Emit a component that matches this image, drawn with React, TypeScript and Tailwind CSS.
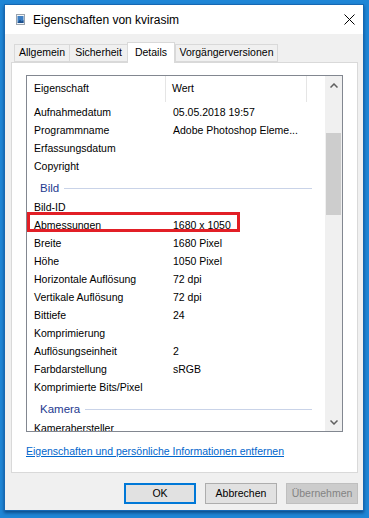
import React from 'react';

type Row = { name: string; value?: string; group?: boolean };

const rows: Row[] = [
  { name: 'Aufnahmedatum', value: '05.05.2018 19:57' },
  { name: 'Programmname', value: 'Adobe Photoshop Eleme...' },
  { name: 'Erfassungsdatum' },
  { name: 'Copyright' },
  { name: 'Bild', group: true },
  { name: 'Bild-ID' },
  { name: 'Abmessungen', value: '1680 x 1050' },
  { name: 'Breite', value: '1680 Pixel' },
  { name: 'Höhe', value: '1050 Pixel' },
  { name: 'Horizontale Auflösung', value: '72 dpi' },
  { name: 'Vertikale Auflösung', value: '72 dpi' },
  { name: 'Bittiefe', value: '24' },
  { name: 'Komprimierung' },
  { name: 'Auflösungseinheit', value: '2' },
  { name: 'Farbdarstellung', value: 'sRGB' },
  { name: 'Komprimierte Bits/Pixel' },
  { name: 'Kamera', group: true },
  { name: 'Kamerahersteller' },
];

const tabs = [
  { label: 'Allgemein', w: 'w-[55px]' },
  { label: 'Sicherheit', w: 'w-[58px]' },
  { label: 'Details', w: 'w-[48px]', active: true },
  { label: 'Vorgängerversionen', w: 'w-[103px]' },
];

const FileIcon = () => (
  <svg width="9" height="11" viewBox="0 0 9 11">
    <rect x="0.5" y="0.5" width="8" height="10" fill="#f4f6f8" stroke="#9aa3ad" />
    <rect x="1.5" y="2" width="6" height="7" fill="#3d7fc4" />
    <path d="M1.5 9 L4 5.5 L5.5 7.5 L7.5 6 L7.5 9 Z" fill="#1d4f8c" />
  </svg>
);

const Chevron = ({ down }: { down?: boolean }) => (
  <svg width="8" height="5" viewBox="0 0 8 5">
    <path d={down ? 'M0.5 0.5 L4 4 L7.5 0.5' : 'M0.5 4.5 L4 1 L7.5 4.5'} fill="none" stroke="#606060" strokeWidth="1.5" />
  </svg>
);

const DetailsList = () => (
  <div className="relative w-[317px] h-[357px] border border-[#828790] bg-white flex">
    <div className="flex-1 overflow-hidden">
      {/* header */}
      <div className="flex h-[26px] mb-[2px] items-center">
        <div className="w-[139px] h-full pl-[7px] flex items-center border-r border-[#e5e5e5]">Eigenschaft</div>
        <div className="w-[141px] h-full pl-[6px] flex items-center border-r border-[#e5e5e5]">Wert</div>
        <div className="flex-1" />
      </div>
      {rows.map(r =>
        r.group ? (
          <div key={r.name} className="h-[22px] flex items-center pl-[13px] pr-[13px] pt-[2px]">
            <span className="text-[11.5px] text-[#1e3a8f]">{r.name}</span>
            <div className="flex-1 h-px bg-[#c9d3e8] ml-[5px]" />
          </div>
        ) : (
          <div key={r.name} className="h-[18.1px] flex items-center">
            <div className="w-[139px] pl-[7px] whitespace-nowrap">{r.name}</div>
            <div className="pl-[7px] whitespace-nowrap">{r.value}</div>
          </div>
        )
      )}
    </div>
    {/* scrollbar */}
    <div className="w-[17px] bg-[#f0f0f0] flex flex-col">
      <div className="h-[17px] flex items-center justify-center pt-[2px]"><Chevron /></div>
      <div className="mt-[40px] mx-[1px] h-[82px] bg-[#cdcdcd]" />
      <div className="flex-1" />
      <div className="h-[17px] flex items-center justify-center"><Chevron down /></div>
    </div>
    {/* annotation */}
    <div className="absolute left-0 top-[136px] w-[213px] h-[20px] border-[3px] border-[#e21f26]" />
  </div>
);

export default function App() {
  return (
    <div className="w-[369px] h-[518px] bg-[#1f86d6] pt-[4px] pl-[4px] font-['Liberation_Sans',Arial,sans-serif] text-[10.5px] text-black">
      <div className="w-[360px] h-[507px] border border-[#1668b3] bg-[#f0f0f0] flex flex-col shadow-[0_2px_3px_rgba(0,40,90,0.6)]">
        {/* title bar */}
        <div className="h-[29px] bg-white flex items-center pl-[11px] pr-[7px]">
          <FileIcon />
          <span className="ml-[8px] text-[12px] flex-1">Eigenschaften von kvirasim</span>
          <svg width="11" height="11" viewBox="0 0 11 11" className="mr-[1px]">
            <path d="M0.5 0.5 L10.5 10.5 M10.5 0.5 L0.5 10.5" stroke="#000" strokeWidth="1" />
          </svg>
        </div>
        {/* client */}
        <div className="flex-1 flex flex-col pl-[6px]">
          <div className="h-[29px] flex items-end pl-[3px] -mb-px relative z-10">
            {tabs.map(t =>
              t.active ? (
                <div key={t.label} className={`${t.w} h-[21px] bg-white border border-b-0 border-[#d9d9d9] flex items-center justify-center pb-[1px]`}>
                  {t.label}
                </div>
              ) : (
                <div key={t.label} className={`${t.w} h-[18px] mb-px bg-[#f0f0f0] border border-r-0 last:border-r border-[#d9d9d9] flex items-center justify-center`}>
                  {t.label}
                </div>
              )
            )}
          </div>
          <div className="w-[347px] h-[411px] bg-white border border-[#d9d9d9] pl-[14px] pt-[12px]">
            <DetailsList />
            <div className="mt-[12px] leading-[15px] text-[#0066cc] underline">
              Eigenschaften und persönliche Informationen entfernen
            </div>
          </div>
          <div className="w-[347px] mt-[10px] flex justify-end gap-[9px]">
            <button className="w-[72px] h-[21px] bg-[#e1e1e1] border-2 border-[#0078d7] text-[10.5px]">OK</button>
            <button className="w-[72px] h-[21px] bg-[#e1e1e1] border border-[#adadad] text-[10.5px]">Abbrechen</button>
            <button className="w-[72px] h-[21px] bg-[#cccccc] border border-[#bfbfbf] text-[#838383] text-[10.5px]">Übernehmen</button>
          </div>
        </div>
      </div>
    </div>
  );
}
